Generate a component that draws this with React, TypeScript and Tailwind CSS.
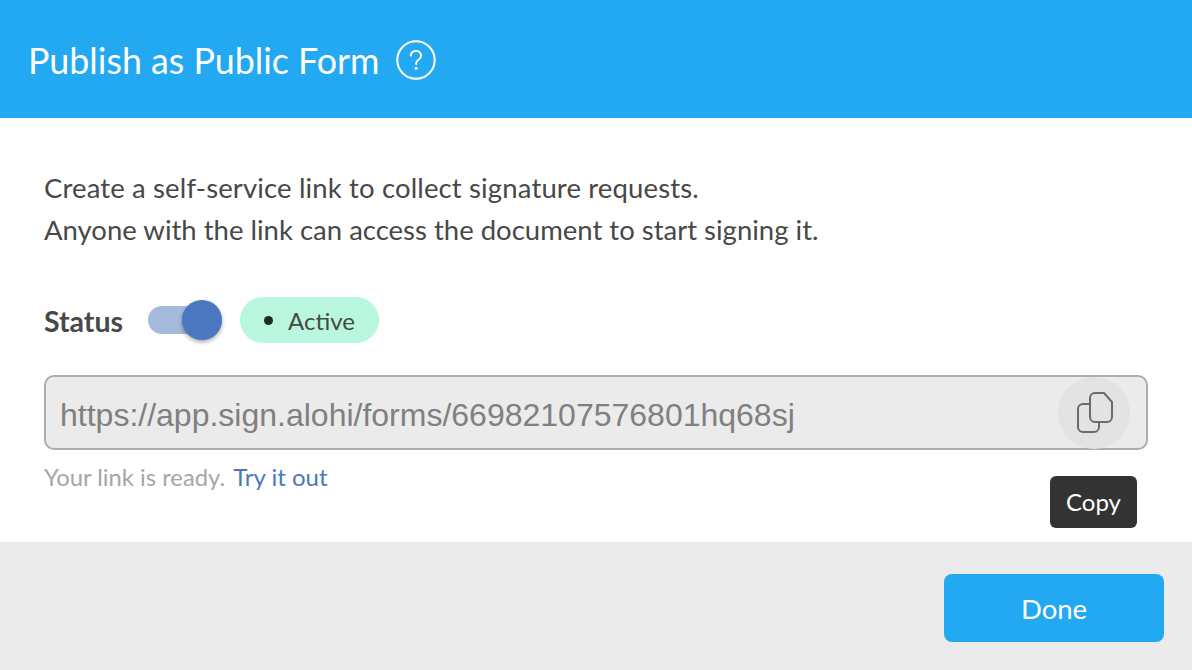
export default function App() {
  return (
    <div className="relative flex h-[670px] w-[1192px] flex-col overflow-hidden bg-white font-['Lato',sans-serif] text-[#484848]">
      <header className="flex h-[118px] shrink-0 items-center bg-[#23a8f2] pt-[3px] pl-[28px] text-white">
        <h1 className="text-[35.8px] leading-[42px] font-normal">Publish as Public Form</h1>
        <svg className="ml-[16px] -translate-y-[1px]" width="40" height="40" viewBox="0 0 40 40" fill="none">
          <circle cx="20" cy="20" r="18.7" stroke="white" strokeWidth="2" />
          <path d="M14.800 15.600c.3-3 2.400-4.600 5.200-4.600 2.900 0 5.100 1.800 5.100 4.500 0 2-1 3.100-2.600 4.200-1.500 1-2.300 1.800-2.300 3.600v.7" stroke="white" strokeWidth="2" strokeLinecap="round" />
          <circle cx="20.100" cy="28.300" r="1.500" fill="white" />
        </svg>
      </header>
      <main className="flex h-[424px] shrink-0 flex-col px-[44px] pt-[49px]">
        <div className="text-[27.5px]">
          <p className="leading-[41px] tracking-[0.14px]">Create a self-service link to collect signature requests.</p>
          <p className="leading-[43px]">Anyone with the link can access the document to start signing it.</p>
        </div>
        <div className="mt-[46px] flex h-[46px] items-center">
          <span className="w-[80px] pt-[2px] text-[28.500px] font-bold">Status</span>
          <div className="relative ml-[24px] h-[28px] w-[74px]">
            <div className="absolute top-0 left-0 h-[28px] w-[66px] rounded-full bg-[#a5bbde]" />
            <div className="absolute top-[-6px] right-0 h-[40px] w-[40px] rounded-full bg-[#4a77be] shadow-[0_2px_4px_rgba(0,0,0,0.35)]" />
          </div>
          <div className="ml-[18px] flex h-[46px] w-[139px] items-center rounded-full bg-[#b8f6de] pl-[24px]">
            <span className="h-[9px] w-[9px] rounded-full bg-[#1f2a28]" />
            <span className="ml-[15px] pt-[2px] text-[24px]">Active</span>
          </div>
        </div>
        <div className="mt-[32px] flex h-[75px] items-center justify-between rounded-[10px] border-2 border-[#adadad] bg-[#ebebeb] pr-[16px] pl-[14px]">
          <span className="pt-[4px] font-['Liberation_Sans',sans-serif] text-[32px] text-[#808080]">https://app.sign.alohi/forms/66982107576801hq68sj</span>
          <div className="flex h-[72px] w-[72px] items-center justify-center rounded-full bg-[#e3e3e3]">
            <svg className="translate-x-[1px]" width="36" height="41" viewBox="0 0 36 41" fill="none" stroke="#6b6b6b" strokeWidth="2" strokeLinejoin="round" strokeLinecap="round">
              <path d="M13 6a5 5 0 0 1 5-5h9l8 9v15a5 5 0 0 1-5 5H18a5 5 0 0 1-5-5z" />
              <path d="M13 12H6a5 5 0 0 0-5 5v18a5 5 0 0 0 5 5h11a5 5 0 0 0 5-5v-5" />
            </svg>
          </div>
        </div>
        <p className="mt-[12px] text-[23.800px] leading-[30px] text-[#a6a6a6]">
          Your link is ready. <a className="ml-[2px] text-[24px] text-[#4a77be]">Try it out</a>
        </p>
      </main>
      <footer className="flex flex-1 items-center justify-end bg-[#ebebeb] pr-[28px]">
        <button className="mt-[4px] h-[68px] w-[220px] rounded-[8px] bg-[#23a8f2] pt-[2px] text-[27.500px] text-white">Done</button>
      </footer>
      <div className="absolute top-[476px] left-[1050px] flex h-[52px] w-[87px] items-center justify-center rounded-[6px] bg-[#333333] text-[24px] text-white">Copy</div>
    </div>
  );
}
